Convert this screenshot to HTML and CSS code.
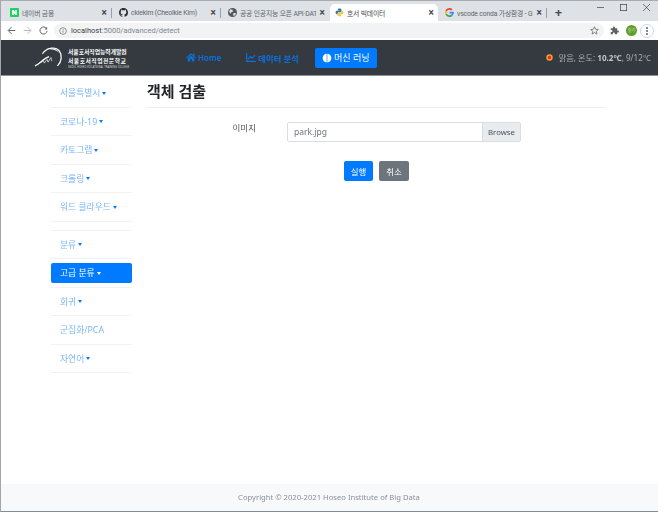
FILE: index.html
```html
<!DOCTYPE html>
<html lang="ko">
<head>
<meta charset="utf-8">
<title>호서 빅데이터</title>
<link rel="stylesheet" href="styles.css">
</head>
<body>
<div class="window">
  <div class="tabstrip">
    <div class="tab">
      <svg class="fav" viewBox="0 0 9 9"><rect width="9" height="9" rx="1" fill="#1fd15f"/><path d="M2.2 2h1.6l1.4 2.2V2h1.6v5H5.2L3.8 4.8V7H2.2z" fill="#fff"/></svg>
      <span class="tab-title">네이버 금융</span>
      <span class="tab-x">×</span>
    </div>
    <i class="tab-sep"></i>
    <div class="tab">
      <svg class="fav" viewBox="0 0 16 16"><path fill="#24292e" d="M8 0C3.58 0 0 3.58 0 8c0 3.54 2.29 6.53 5.47 7.59.4.07.55-.17.55-.38 0-.19-.01-.82-.01-1.49-2.01.37-2.53-.49-2.69-.94-.09-.23-.48-.94-.82-1.13-.28-.15-.68-.52-.01-.53.63-.01 1.08.58 1.23.82.72 1.21 1.87.87 2.33.66.07-.52.28-.87.51-1.07-1.78-.2-3.64-.89-3.64-3.95 0-.87.31-1.59.82-2.15-.08-.2-.36-1.02.08-2.12 0 0 .67-.21 2.2.82.64-.18 1.32-.27 2-.27s1.36.09 2 .27c1.53-1.04 2.2-.82 2.2-.82.44 1.1.16 1.92.08 2.12.51.56.82 1.27.82 2.15 0 3.07-1.87 3.75-3.65 3.95.29.25.54.73.54 1.48 0 1.07-.01 1.93-.01 2.2 0 .21.15.46.55.38A8.01 8.01 0 0 0 16 8c0-4.42-3.58-8-8-8z"/></svg>
      <span class="tab-title">ckiekim (Cheolkie Kim)</span>
      <span class="tab-x">×</span>
    </div>
    <i class="tab-sep"></i>
    <div class="tab">
      <svg class="fav" viewBox="0 0 16 16"><circle cx="8" cy="8" r="8" fill="#55585c"/><path fill="#dee1e6" d="M4 2l4 1 1 3-3 1-1 3-3-3 1-3zM10 9l4 0-1 4-3 1-1-3z"/></svg>
      <span class="tab-title">공공 인공지능 오픈 API·DAT</span>
      <span class="tab-x">×</span>
    </div>
    <div class="tab tab-active">
      <svg class="fav" viewBox="0 0 16 16"><path fill="#3c78aa" d="M8 1C5 1 5 2.300 5 3v1.500h3.200V5H3.200C2 5 1 6.200 1 8s1 3 2.200 3H5V9.300C5 8 6 7.500 7 7.500h3c1 0 1.500-.7 1.500-1.500V3C11.500 2 10 1 8 1z"/><path fill="#f5c93c" d="M8 15c3 0 3-1.300 3-2v-1.500H7.800V11h5c1.200 0 2.200-1.200 2.200-3s-1-3-2.200-3H11v1.700C11 8 10 8.500 9 8.500H6c-1 0-1.500.7-1.500 1.500v3C4.500 14 6 15 8 15z"/></svg>
      <span class="tab-title">호서 빅데이터</span>
      <span class="tab-x">×</span>
    </div>
    <div class="tab">
      <svg class="fav" viewBox="0 0 16 16"><path fill="#4285f4" d="M15.700 8.200c0-.6-.1-1.100-.2-1.600H8v3h4.300c-.2 1-.8 1.800-1.600 2.400l2.500 1.900c1.500-1.400 2.500-3.400 2.500-5.700z"/><path fill="#34a853" d="M8 16c2.200 0 4-.7 5.200-2l-2.500-1.900c-.7.500-1.600.8-2.700.8-2.100 0-3.900-1.400-4.500-3.300L.900 11.500C2.200 14.200 4.900 16 8 16z"/><path fill="#fbbc05" d="M3.500 9.600C3.200 8.600 3.200 7.400 3.500 6.400L.900 4.500C-.2 6.600-.2 9.400.9 11.500z"/><path fill="#ea4335" d="M8 3.100c1.200 0 2.200.4 3 1.200l2.300-2.300C11.900.7 10.100 0 8 0 4.900 0 2.200 1.800.9 4.500l2.600 1.900C4.100 4.500 5.900 3.100 8 3.100z"/></svg>
      <span class="tab-title">vscode conda 가상환경 - G</span>
      <span class="tab-x">×</span>
    </div>
    <i class="tab-sep"></i>
    <span class="tab-new">+</span>
    <div class="win-controls">
      <svg class="win-btn" viewBox="0 0 10 10"><path d="M0 5h10" stroke="#444" fill="none"/></svg>
      <svg class="win-btn" viewBox="0 0 10 10"><rect x=".5" y=".5" width="9" height="9" stroke="#444" fill="none"/></svg>
      <svg class="win-btn" viewBox="0 0 10 10"><path d="M0 0l10 10M10 0L0 10" stroke="#444" fill="none"/></svg>
    </div>
  </div>

  <div class="toolbar">
    <svg class="tb-icon" viewBox="0 0 12 12"><path d="M11 6H2M6 1.500L1.500 6 6 10.500" stroke="#5f6368" stroke-width="1.300" fill="none"/></svg>
    <svg class="tb-icon" viewBox="0 0 12 12"><path d="M1 6h9M6 1.500L10.500 6 6 10.500" stroke="#b4b7bb" stroke-width="1.300" fill="none"/></svg>
    <svg class="tb-icon" viewBox="0 0 12 12"><path d="M10 3.500A4.700 4.700 0 1 0 10.700 6.500" stroke="#5f6368" stroke-width="1.300" fill="none"/><path d="M10.800 1v3.500H7.300z" fill="#5f6368"/></svg>
    <div class="omnibox">
      <svg class="info" viewBox="0 0 12 12"><circle cx="6" cy="6" r="5" stroke="#5f6368" fill="none"/><path d="M6 5v3.500M6 3v1.200" stroke="#5f6368"/></svg>
      <span class="url"><span class="url-host">localhost</span>:5000/advanced/detect</span>
      <svg class="star" viewBox="0 0 12 12"><path d="M6 1l1.500 3.400 3.600.3-2.800 2.400.9 3.600L6 8.800l-3.200 1.900.9-3.600L.9 4.700l3.600-.3z" stroke="#5f6368" fill="none"/></svg>
    </div>
    <svg class="ext" viewBox="0 0 12 12"><path fill="#5f6368" d="M1 3h3V2a1.300 1.300 0 0 1 2.600 0v1h3v3h1a1.300 1.300 0 0 1 0 2.600h-1V11H6.500v-1a1.300 1.300 0 0 0-2.600 0v1H1V8h1a1.300 1.300 0 0 0 0-2.600H1z"/></svg>
    <span class="avatar">철기</span>
    <span class="menu-ring"><i></i><i></i><i></i></span>
  </div>

  <nav class="navbar">
    <a class="brand">
      <svg class="brand-mark" viewBox="0 0 32 24"><path d="M1 21C6 19 10 13 16 11M9 8C14 1 23 0 27 5c3 4 3 11-2 16" stroke="#fff" stroke-width="1.300" fill="none"/><path d="M7 18l3-3 1 3 3-4 1 3 3-5 1 4" stroke="#eee" stroke-width=".8" fill="none"/><path d="M13 3c6-2 12 0 14 4-3-3-8-4-14-4z" fill="#fff"/></svg>
      <span class="brand-text">
        <span class="brand-l1">서울호서직업능력개발원</span>
        <span class="brand-l2">서울호서직업전문학교</span>
        <span class="brand-l3">SEOUL HOSEO VOCATIONAL TRAINING COLLEGE</span>
      </span>
    </a>
    <div class="nav-items">
      <a class="nav-link">
        <svg class="nav-icon" viewBox="0 0 576 512"><path fill="currentColor" d="M280 148L96 300v164c0 9 7 16 16 16l112-.300c9 0 16-7 16-16V368c0-9 7-16 16-16h64c9 0 16 7 16 16v96c0 9 7 16 16 16l112 .300c9 0 16-7 16-16V300L296 148c-5-4-11-4-16 0zM572 251l-84-69V44c0-7-5-12-12-12h-56c-7 0-12 5-12 12v72l-90-74c-18-15-43-15-61 0L4 251c-5 4-6 12-2 17l26 31c4 5 12 6 17 2L280 107c5-4 11-4 16 0l235 194c5 4 13 3 17-2l26-31c4-5 3-13-2-17z"/></svg>Home
      </a>
      <a class="nav-link">
        <svg class="nav-icon" viewBox="0 0 16 14"><path fill="currentColor" d="M0 0h2v12h14v2H0z"/><path d="M3.500 9.500L7 5.500l2.500 2.500L14.500 3" stroke="currentColor" stroke-width="2" fill="none"/></svg>데이터 분석
      </a>
      <a class="nav-link nav-active">
        <svg class="nav-icon brain" viewBox="0 0 16 16"><path fill="#fff" d="M7.500 1C4 1 1 4 1 8s3 7 6.500 7zM8.500 1v14C12 15 15 12 15 8s-3-7-6.500-7z"/></svg>머신 러닝
      </a>
    </div>
    <div class="weather">
      <svg class="sun" viewBox="0 0 12 12"><circle cx="6" cy="6" r="5.500" fill="#f0a030"/><circle cx="6" cy="6" r="2.800" fill="#e8281c"/></svg>
      <span>맑음, 온도: <b>10.2℃</b>, 9/12℃</span>
    </div>
  </nav>

  <main class="main">
    <aside class="sidebar">
      <ul class="side-group">
        <li class="side-item"><a class="side-link caret">서울특별시</a></li>
        <li class="side-item"><a class="side-link caret">코로나-19</a></li>
        <li class="side-item"><a class="side-link caret">카토그램</a></li>
        <li class="side-item"><a class="side-link caret">크롤링</a></li>
        <li class="side-item"><a class="side-link caret">워드 클라우드</a></li>
      </ul>
      <ul class="side-group second">
        <li class="side-item"><a class="side-link caret">분류</a></li>
        <li class="side-item"><a class="side-link caret active">고급 분류</a></li>
        <li class="side-item"><a class="side-link caret">회귀</a></li>
        <li class="side-item"><a class="side-link">군집화/PCA</a></li>
        <li class="side-item"><a class="side-link caret">자연어</a></li>
      </ul>
    </aside>
    <section class="content">
      <h1 class="title">객체 검출</h1>
      <form class="form">
        <div class="form-row">
          <label class="form-label">이미지</label>
          <div class="file">
            <span class="file-name">park.jpg</span>
            <span class="file-btn">Browse</span>
          </div>
        </div>
        <div class="actions">
          <button type="button" class="btn btn-primary">실행</button>
          <button type="button" class="btn btn-secondary">취소</button>
        </div>
      </form>
    </section>
  </main>

  <footer class="footer">Copyright © 2020-2021 Hoseo Institute of Big Data</footer>
</div>
</body>
</html>
```

FILE: styles.css
```css
* { box-sizing: border-box; }
html, body { margin: 0; padding: 0; height: 100%; overflow: hidden; background: #fff; }
body { font-family: "Noto Sans", "Noto Sans CJK KR", sans-serif; }
a { text-decoration: none; }
ul { list-style: none; margin: 0; padding: 0; }

.window {
  width: 658px; height: 512px; display: flex; flex-direction: column;
  border-left: 1px solid #a3a6aa; border-bottom: 1px solid #7f8c99; border-top: 1px solid #a8abaf;
  filter: blur(.3px);
}

/* Browser chrome */
.tabstrip {
  height: 20px; flex: none; display: flex; align-items: flex-end;
  background: #dee1e6; padding-left: 2px;
}
.tab {
  width: 108px; height: 17px; flex: none; display: flex; align-items: center;
  padding: 0 3px 0 7px; font-family: Roboto, "Noto Sans CJK KR", sans-serif; font-size: 6.800px; letter-spacing: -.15px; color: #5f6368;
}
.tab-active { background: #fff; border-radius: 5px 5px 0 0; margin-left: 1px; color: #45484c; padding-left: 5px; }
.fav { width: 9px; height: 9px; flex: none; margin-right: 3px; }
.tab-title { flex: 1; min-width: 0; white-space: nowrap; overflow: hidden; }
.tab-x { flex: none; width: 8px; text-align: center; font-size: 10px; line-height: 10px; color: #45484c; font-weight: 700; margin-left: 2px; }
.tab-sep { flex: none; width: 1px; height: 10px; background: #9aa0a6; margin-bottom: 3px; }
.tab-new { flex: none; width: 23px; height: 17px; text-align: center; font-size: 13px; line-height: 16px; color: #45484c; font-weight: 700; }
.win-controls { margin-left: auto; align-self: flex-start; display: flex; gap: 16px; padding: 3px 8px 0 0; }
.win-btn { width: 7px; height: 7px; display: block; }

.toolbar {
  height: 19px; flex: none; display: flex; align-items: center;
  background: #fff; padding: 0 4px 0 6px;
}
.tb-icon { width: 9px; height: 9px; flex: none; margin-right: 7px; }
.omnibox {
  width: 550px; flex: none; height: 15px; margin-left: -1px; border-radius: 8px;
  background: #f1f3f4; display: flex; align-items: center; padding: 0 5px;
}
.info { width: 8px; height: 8px; flex: none; margin-right: 4px; }
.url { font-family: Roboto, sans-serif; font-size: 7.500px; color: #80868b; flex: 1; white-space: nowrap; }
.url-host { color: #3c4043; }
.star { width: 9px; height: 9px; flex: none; }
.ext { width: 9px; height: 9px; flex: none; margin: 0 7px 0 6px; }
.avatar {
  width: 11px; height: 11px; flex: none; border-radius: 50%; background: #5f9e2f; color: #cfe3b4;
  font-size: 4px; line-height: 11px; text-align: center; margin-right: 3px;
}
.menu-ring {
  width: 14px; height: 14px; flex: none; border: 1px solid #c5d8f5; border-radius: 50%;
  display: flex; flex-direction: column; align-items: center; justify-content: center; gap: 1px;
}
.menu-ring i { width: 2px; height: 2px; background: #5f6368; border-radius: 50%; }

/* Navbar */
.navbar {
  height: 36px; flex: none; display: flex; align-items: center; background: #343a40;
  border-bottom: 1px solid #8f9398; padding-left: 33px;
}
.brand { display: flex; align-items: center; width: 152px; flex: none; }
.brand-mark { width: 30px; height: 23px; flex: none; margin-right: 4px; }
.brand-text { display: flex; flex-direction: column; color: #fff; white-space: nowrap; padding-top: 3px; }
.brand-l1, .brand-l2 { font-size: 5.800px; line-height: 8.500px; font-weight: 700; }
.brand-l2 { letter-spacing: .5px; }
.brand-l3 { font-size: 2.700px; line-height: 4.500px; color: #d8d8d8; }
.nav-items { display: flex; align-items: center; gap: 25px; flex: none; }
.nav-link { display: flex; align-items: center; color: #0b6fd8; font-size: 8px; font-weight: 600; white-space: nowrap; height: 20px; }
.nav-link:nth-child(2) { font-size: 8.400px; }
.nav-icon { width: 10px; height: 9px; margin-right: 2px; flex: none; }
.nav-active { background: #007bff; color: #fff; border-radius: 2px; padding: 0 7px; font-size: 9px; font-weight: 400; margin-left: -9px; }
.brain { width: 10px; height: 10px; }
.weather { margin-left: auto; padding-right: 7px; display: flex; align-items: center; color: #a9aeb3; font-size: 8.150px; white-space: nowrap; }
.weather b { font-weight: 700; color: #c2c6ca; }
.sun { width: 7px; height: 7px; margin-right: 6px; flex: none; }

/* Main */
.main { flex: 1; min-height: 0; display: flex; padding: 3px 0 0 50px; }
.sidebar { width: 81px; flex: none; margin-right: 14px; }
.side-item { border-bottom: 1px solid #f1f2f3; padding: 4px 0; height: 28.500px; }
.side-group.second { margin-top: 8px; border-top: 1px solid #f1f2f3; }
.side-link { display: block; height: 19.500px; line-height: 20px; padding-left: 9px; font-size: 8.800px; color: #7db6f5; border-radius: 2px; white-space: nowrap; }
.side-link.active { background: #007bff; color: #fff; }
.caret::after {
  content: ""; display: inline-block; margin-left: 2px; vertical-align: 1.500px;
  border-top: 3px solid currentColor; border-left: 2.500px solid transparent; border-right: 2.500px solid transparent;
}
.side-link.caret::after { border-top-color: #007bff; }
.side-link.active.caret::after { border-top-color: #fff; }

.content { width: 460px; flex: none; }
.title {
  margin: 0; height: 29px; padding-left: 1px; font-size: 15px; line-height: 24px; font-weight: 700;
  color: #212529; border-bottom: 1px solid #eceeef; white-space: nowrap;
}
.form-row { display: flex; margin-top: 14px; height: 20px; }
.form-label { width: 141px; flex: none; text-align: right; padding-right: 31px; font-size: 8.500px; line-height: 12px; color: #495057; }
.file { width: 234px; height: 20px; flex: none; display: flex; border: 1px solid #dadde1; border-radius: 2px; overflow: hidden; }
.file-name { flex: 1; padding-left: 6px; font-size: 8.500px; line-height: 18px; color: #6c757d; }
.file-btn { width: 38px; flex: none; background: #e9ecef; border-left: 1px solid #dadde1; text-align: center; font-size: 7.800px; line-height: 18px; color: #495057; }
.actions { display: flex; justify-content: flex-start; gap: 6px; margin: 19px 0 0 198px; }
.btn { width: 29px; height: 20px; padding: 0; border: 1px solid transparent; border-radius: 2px; font-family: inherit; font-size: 8.500px; color: #fff; }
.btn-primary { background: #007bff; }
.btn-secondary { background: #6c757d; width: 30px; }

.footer {
  height: 27px; flex: none; background: #f8f9fa; color: #8a9096; font-size: 7.650px; line-height: 27px;
  text-align: center; padding-right: 1px;
}
```
